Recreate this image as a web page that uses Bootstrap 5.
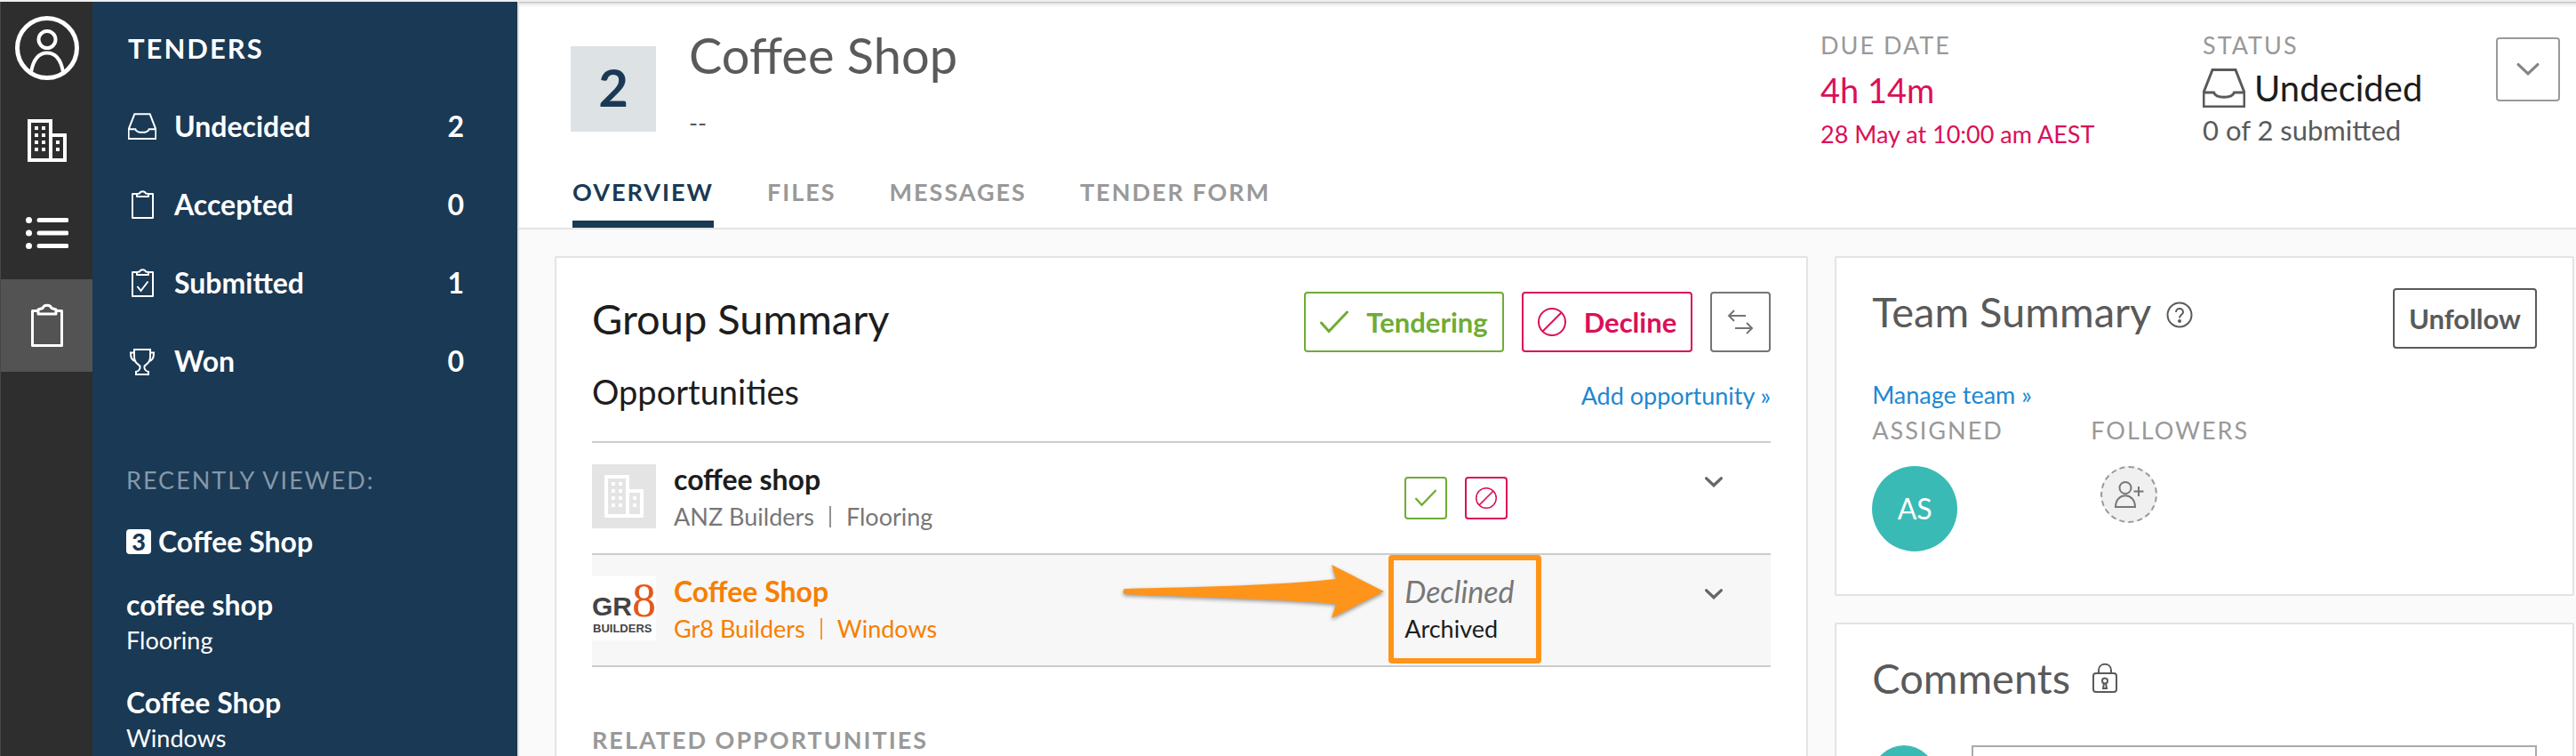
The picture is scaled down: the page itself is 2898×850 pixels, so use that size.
<!DOCTYPE html>
<html lang="en">
<head>
<meta charset="utf-8">
<meta name="viewport" content="width=device-width, initial-scale=1">
<title>Coffee Shop – Tenders</title>
<link rel="stylesheet" href="https://cdn.jsdelivr.net/npm/bootstrap@5.3.0/dist/css/bootstrap.min.css">
<style>
  :root { --navy:#1a3954; --ink:#1d1d1d; --slate:#5a5a5a; --mute:#999; --line:#e3e3e3; --pink:#da1058; --green:#6fac35; --blue:#1e88d2; --orange:#f77f00; --teal:#3abab5; }
  body { font-family:Lato, "Liberation Sans", sans-serif; font-size:27px; line-height:40px; color:var(--ink); background:#fafafa; }
  a { text-decoration:none; }
  svg { display:block; flex:none; fill:none; stroke:currentColor; }
  h1, h2, h3, h4, p, ul { margin:0; padding:0; }
  .shell { height:100vh; border-top:2px solid #eee; }
  .rail { width:104px; background:#2e2e2e; border-left:1px solid #464646; }
  .rail a { height:104px; color:#fff; }
  .rail a.current { background:#535353; }
  .side { width:478px; background:var(--navy); color:#fff; padding:32px 60px 0 38px; }
  .side a { color:#fff; }
  .side-title { font-size:31px; line-height:40px; font-weight:700; letter-spacing:2px; padding-left:2px; }
  .counts { margin-top:24px; }
  .counts a { line-height:88px; font-size:32px; font-weight:700; }
  .counts svg { width:32px; height:32px; margin:0 20px 0 2px; stroke-width:2; }
  .caps { letter-spacing:2px; color:var(--mute); text-transform:uppercase; line-height:32px; font-weight:400; font-size:27px; }
  .side .caps { color:#8598a8; margin-top:74px; }
  .recent { margin-top:32px; display:grid; gap:30px; }
  .strong-line { font-size:32px; font-weight:700; line-height:42px; display:block; }
  .recent a > span { display:block; line-height:40px; }
  .recent a > .strong-line { line-height:40px; }
  .tally { width:28px; height:28px; border-radius:4px; background:#fff; color:var(--navy); font-size:27px; font-weight:900; text-align:center; margin-right:8px; }
  .recent a > .tally { line-height:28px; }
  .workspace { min-width:0; border-left:2px solid #e0e0e0; overflow:hidden; }
  .topbar { background:linear-gradient(#bbb, #e8e8e8 2px, #fff 6px); border-bottom:2px solid var(--line); padding:28px 18px 0 58px; }
  .group-count { width:96px; height:96px; margin:22px 37px 0 0; background:#dde2e4; color:var(--navy); font-size:58px; font-weight:700; line-height:92px; text-align:center; }
  h1 { font-size:56px; line-height:64px; font-weight:400; color:var(--slate); }
  .subtitle { margin-top:24px; color:var(--slate); }
  .facts { padding-top:5px; }
  .due { width:430px; color:var(--pink); }
  .status-col { width:330px; color:var(--slate); }
  .due-in { font-size:38px; line-height:48px; margin-top:10px; }
  .due-at { line-height:36px; margin-top:8px; }
  .state { font-size:40px; line-height:48px; color:var(--ink); margin-top:8px; gap:10px; }
  .state svg { color:var(--slate); }
  .progress-note { font-size:31px; line-height:36px; margin-top:5px; }
  .frame-btn { border:2px solid currentColor; border-radius:4px; background:#fff; height:68px; padding:0 16px; font-size:31px; font-weight:700; line-height:40px; color:var(--slate); gap:20px; }
  .frame-btn.more { width:72px; height:72px; padding:0; color:#858585; margin-top:12px; border-color:#999; }
  .frame-btn.swap { color:#757575; }
  .tabs { gap:60px; padding-left:2px; margin-top:27px; }
  .tabs .nav-link { padding:0 0 12px; border-bottom:8px solid transparent; font-weight:700; color:var(--mute); letter-spacing:2px; line-height:40px; }
  .tabs .nav-link.active { color:var(--navy); border-color:var(--navy); }
  .board { display:grid; grid-template-columns:629fr 371fr; gap:30px; padding:30px 2px 0 40px; }
  .panel { background:#fff; border:2px solid var(--line); border-radius:2px; padding:38px 40px 48px; }
  .main-panel { min-height:620px; }
  .side-panels { display:grid; gap:30px; align-content:start; }
  .side-panels .panel { padding-top:34px; color:var(--slate); }
  h2 { font-size:47px; line-height:52px; font-weight:400; }
  .main-panel h2 { line-height:60px; }
  h3 { font-size:38px; line-height:48px; font-weight:400; }
  .sub-head { margin-top:20px; }
  .btn-set { gap:20px; }
  .blue-link { color:var(--blue); }
  .opps { list-style:none; margin-top:31px; border-top:2px solid #ccc; }
  .opps li { min-height:126px; border-bottom:2px solid #ccc; }
  .opps li.archived { background:#f7f7f7; }
  .logo { width:72px; height:72px; margin:24px 20px 0 0; background:#e4e4e4; color:#fff; }
  .brand { overflow:visible; stroke:none; font-family:"Liberation Sans", sans-serif; font-weight:700; fill:#444; }
  .brand .eight { font-family:"Liberation Serif", serif; font-weight:400; fill:#e3591c; }
  .opp-text { padding-top:20px; line-height:42px; color:#777; }
  .opp-text .strong-line { color:var(--ink); }
  .opp-text i { width:2px; height:24px; margin:0 17px; background:currentColor; opacity:.8; }
  .archived .opp-text, .archived .strong-line { color:var(--orange); }
  .decision { position:relative; width:338px; line-height:42px; }
  .decision .frame-btn { width:48px; height:48px; padding:0; margin-top:38px; }
  .decision em { display:block; font-size:34px; color:#777; padding-top:20px; }
  .toggle { border:0; background:none; padding:0; height:20px; color:#666; margin:34px 54px 0 0; }
  .callout-box { position:absolute; left:-18px; top:0; width:172px; height:122px; border:6px solid #ff941a; border-radius:4px; }
  .callout-arrow { position:absolute; left:-320px; top:4px; filter:drop-shadow(0 2px 2px #0006); }
  .text-tender { color:var(--green); } .text-decline { color:var(--pink); }
  .related { margin-top:62px; line-height:40px; font-weight:700; }
  .help { margin-top:14px; }
  .avatar { width:96px; height:96px; border-radius:50%; background:var(--teal); color:#fff; font-size:32px; line-height:96px; text-align:center; }
  .avatar.mini { width:72px; height:72px; }
  .assigned { width:246px; }
  .people .caps { line-height:40px; margin-bottom:20px; }
  .add-person { width:64px; height:64px; border:2px dashed #999; border-radius:50%; background:#f0f0f0; color:#777; padding:0; margin:2px 0 0 11px; }
  .comment-row { margin-top:50px; gap:40px; }
  .comment-row textarea { height:120px; border:2px solid #aaa; resize:none; }
</style>
</head>
<body>
<svg width="0" height="0" class="position-absolute" aria-hidden="true">
  <symbol id="inbox" viewBox="0 0 48 44"><path d="M11 1.500H37L47 27V43H1V27ZM1 27H12.500C15 34 33 34 35.500 27H47"/></symbol>
  <symbol id="clipboard" viewBox="0 0 32 32"><path d="M10 4H5V31H28V4H23M10 4V7H23V4L20 3.500C19 0.500 14 0.500 13 3.500Z" stroke-linejoin="round"/></symbol>
  <symbol id="building" viewBox="0 0 44 48"><path d="M2 2H26V46H2ZM26 18H42V46H26" stroke-width="4"/><path d="M10 8V38M18 8V38M34 24V38" stroke-width="4" stroke-dasharray="4 4"/></symbol>
  <symbol id="tick" viewBox="0 0 32 26"><path d="M1.500 14L10 23.500L30.500 2" stroke-linecap="round"/></symbol>
  <symbol id="ban" viewBox="0 0 32 32"><circle cx="16" cy="16" r="15"/><path d="M5.500 26.500L26.500 5.500"/></symbol>
  <symbol id="down" viewBox="0 0 24 14"><path d="M2 2L12 11.500L22 2" stroke-linecap="round"/></symbol>
</svg>

<div class="shell d-flex overflow-hidden">
  <nav class="rail flex-shrink-0" aria-label="Sections">
    <a href="#" class="d-flex align-items-center justify-content-center" aria-label="Profile"><svg width="72" height="72" viewBox="0 0 72 72" stroke-width="5"><circle cx="36" cy="36" r="33.500"/><circle cx="36" cy="26.500" r="9.500" stroke-width="4"/><path d="M18 63C21 46 28 41.500 36 41.500S51 46 54 63" stroke-width="4"/></svg></a>
    <a href="#" class="d-flex align-items-center justify-content-center" aria-label="Projects"><svg width="44" height="48"><use href="#building"/></svg></a>
    <a href="#" class="d-flex align-items-center justify-content-center" aria-label="Lists"><svg width="48" height="38" viewBox="0 0 48 38" stroke-linecap="round" stroke-width="5"><path d="M15 4.500H46M15 19H46M15 33.500H46"/><path stroke-width="7" d="M3.500 4.500h0M3.500 19h0M3.500 33.500h0"/></svg></a>
    <a href="#" class="current d-flex align-items-center justify-content-center" aria-label="Tenders" aria-current="page"><svg width="36" height="50" viewBox="0 0 36 50" stroke-width="3" stroke-linejoin="round"><path d="M8 8.500H1.500V47.500H34.500V8.500H28M8 7V12H28V7L23 5.500C21.500 1 14.500 1 13 5.500Z"/></svg></a>
  </nav>

  <aside class="side flex-shrink-0">
    <h2 class="side-title">TENDERS</h2>
    <div class="counts">
      <a href="#" class="d-flex align-items-center"><svg><use href="#inbox" stroke-width="3"/></svg><span class="flex-grow-1">Undecided</span><span>2</span></a>
      <a href="#" class="d-flex align-items-center"><svg><use href="#clipboard"/></svg><span class="flex-grow-1">Accepted</span><span>0</span></a>
      <a href="#" class="d-flex align-items-center"><svg viewBox="0 0 32 32"><use href="#clipboard"/><path d="M10.500 20L14.500 25L22.500 14.500"/></svg><span class="flex-grow-1">Submitted</span><span>1</span></a>
      <a href="#" class="d-flex align-items-center"><svg viewBox="0 0 32 32"><path d="M7 3H25V11C25 17 22 19 18.500 21.500C18 25 19 27 23 28V31H9V28C13 27 14 25 13.500 21.500C10 19 7 17 7 11ZM7 6.500H3C3 12 4 15 9 16.500M25 6.500H29C29 12 28 15 23 16.500"/></svg><span class="flex-grow-1">Won</span><span>0</span></a>
    </div>
    <p class="caps">Recently viewed:</p>
    <div class="recent">
      <a href="#" class="strong-line d-flex align-items-center"><span class="tally">3</span>Coffee Shop</a>
      <a href="#"><span class="strong-line">coffee shop</span><span>Flooring</span></a>
      <a href="#"><span class="strong-line">Coffee Shop</span><span>Windows</span></a>
    </div>
  </aside>

  <main class="workspace flex-grow-1">
    <header class="topbar">
      <div class="d-flex align-items-start">
        <div class="group-count">2</div>
        <div class="flex-grow-1"><h1>Coffee Shop</h1><p class="subtitle">--</p></div>
        <div class="facts due"><div class="caps">Due date</div><div class="due-in">4h 14m</div><div class="due-at">28 May at 10:00 am AEST</div></div>
        <div class="facts status-col"><div class="caps">Status</div><div class="state d-flex align-items-center"><svg width="48" height="44" stroke-width="3"><use href="#inbox"/></svg>Undecided</div><div class="progress-note">0 of 2 submitted</div></div>
        <button type="button" class="frame-btn more d-flex align-items-center justify-content-center" aria-label="More actions"><svg width="26" height="16" stroke-width="3"><use href="#down"/></svg></button>
      </div>
      <nav class="nav tabs" aria-label="Tender">
        <a class="nav-link active" href="#" aria-current="page">OVERVIEW</a>
        <a class="nav-link" href="#">FILES</a>
        <a class="nav-link" href="#">MESSAGES</a>
        <a class="nav-link" href="#">TENDER FORM</a>
      </nav>
    </header>

    <div class="board">
      <section class="panel main-panel">
        <div class="d-flex align-items-start">
          <h2 class="flex-grow-1">Group Summary</h2>
          <div class="btn-set d-flex">
            <button type="button" class="frame-btn text-tender d-flex align-items-center"><svg width="32" height="26" stroke-width="3"><use href="#tick"/></svg>Tendering</button>
            <button type="button" class="frame-btn text-decline d-flex align-items-center"><svg width="32" height="32" stroke-width="2"><use href="#ban"/></svg>Decline</button>
            <button type="button" class="frame-btn swap d-flex align-items-center" aria-label="Swap"><svg width="32" height="32" viewBox="0 0 32 32" stroke-width="2"><path d="M22 9H3M9 3L3 9L9 15M10 23H29M23 17L29 23L23 29"/></svg></button>
          </div>
        </div>
        <div class="sub-head d-flex align-items-baseline justify-content-between">
          <h3>Opportunities</h3><a href="#" class="blue-link">Add opportunity »</a>
        </div>
        <ul class="opps">
          <li class="d-flex">
            <span class="logo d-flex align-items-center justify-content-center"><svg width="44" height="48"><use href="#building"/></svg></span>
            <div class="opp-text flex-grow-1"><a href="#" class="strong-line">coffee shop</a><div class="d-flex align-items-center">ANZ Builders<i></i>Flooring</div></div>
            <div class="decision btn-set d-flex">
              <button type="button" class="frame-btn text-tender d-flex align-items-center justify-content-center" aria-label="Tender"><svg width="24" height="20" stroke-width="3"><use href="#tick"/></svg></button>
              <button type="button" class="frame-btn text-decline d-flex align-items-center justify-content-center" aria-label="Decline"><svg width="24" height="24" stroke-width="2"><use href="#ban"/></svg></button>
            </div>
            <button type="button" class="toggle" aria-label="Expand"><svg width="20" height="12" stroke-width="4"><use href="#down"/></svg></button>
          </li>
          <li class="d-flex archived">
            <span class="logo bg-white"><svg class="brand" width="72" height="72" viewBox="0 0 72 72"><text x="0" y="44" font-size="30">GR</text><text x="1" y="63" font-size="13">BUILDERS</text><text class="eight" x="45" y="45" font-size="54">8</text></svg></span>
            <div class="opp-text flex-grow-1"><a href="#" class="strong-line">Coffee Shop</a><div class="d-flex align-items-center">Gr8 Builders<i></i>Windows</div></div>
            <div class="decision">
              <em>Declined</em>Archived
              <span class="callout-box"></span>
              <svg class="callout-arrow" width="300" height="76" viewBox="0 0 300 76"><path fill="#ff941a" stroke="none" d="M5 34C90 32 180 30 243 23L238 7L297 37L238 67L243 51C190 46 100 44 5 40Q2 37 5 34Z"/></svg>
            </div>
            <button type="button" class="toggle" aria-label="Expand"><svg width="20" height="12" stroke-width="4"><use href="#down"/></svg></button>
          </li>
        </ul>
        <h4 class="caps related">Related opportunities</h4>
      </section>

      <div class="side-panels">
        <section class="panel">
          <div class="d-flex align-items-start">
            <h2>Team Summary</h2>
            <svg class="help ms-3" width="32" height="32" viewBox="0 0 32 32" stroke-width="2"><circle cx="16" cy="16" r="13.500"/><path d="M12 13C12 7.500 20 7.500 20 13C20 16 16 15.500 16 19.500"/><circle cx="16" cy="23" r="1" fill="currentColor"/></svg>
            <button type="button" class="frame-btn ms-auto">Unfollow</button>
          </div>
          <a href="#" class="blue-link d-block mt-4 pt-2">Manage team »</a>
          <div class="people d-flex">
            <div class="assigned"><div class="caps">Assigned</div><div class="avatar">AS</div></div>
            <div><div class="caps">Followers</div><button type="button" class="add-person d-flex align-items-center justify-content-center" aria-label="Add follower"><svg width="34" height="32" viewBox="0 0 34 32" stroke-width="2"><circle cx="13" cy="8.500" r="6.500"/><path d="M2 30C2 13 24 13 24 30ZM28 7V18M22.500 12.500H33.500"/></svg></button></div>
          </div>
        </section>
        <section class="panel">
          <div class="d-flex align-items-center">
            <h2>Comments</h2>
            <svg class="ms-4" width="30" height="34" viewBox="0 0 30 34" stroke-width="2"><rect x="2" y="12" width="26" height="21" rx="3"/><path d="M8 12V8.500C8 -0.500 22 -0.500 22 8.500V12M14 23L13 29H17L16 23"/><circle cx="15" cy="20.500" r="3"/></svg>
          </div>
          <div class="comment-row d-flex">
            <div class="avatar mini"></div>
            <textarea class="flex-grow-1" aria-label="Comment"></textarea>
          </div>
        </section>
      </div>
    </div>
  </main>
</div>
<script src="https://cdn.jsdelivr.net/npm/bootstrap@5.3.0/dist/js/bootstrap.bundle.min.js"></script>
</body>
</html>
